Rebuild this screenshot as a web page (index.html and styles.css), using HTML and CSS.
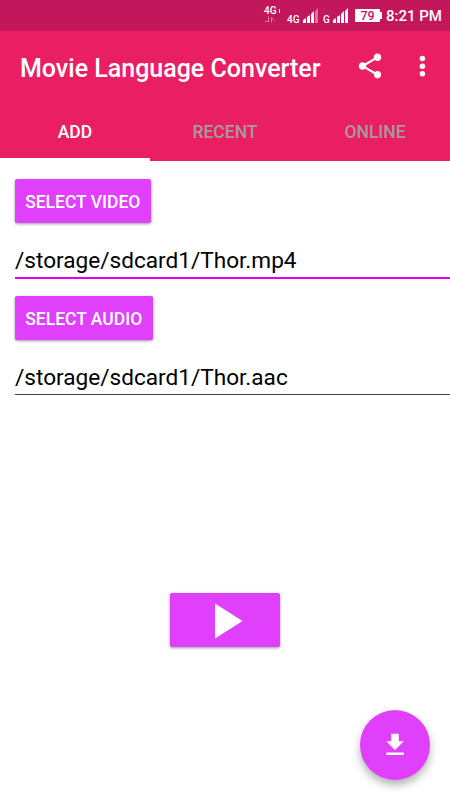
FILE: index.html
```
<!DOCTYPE html>
<html lang="en">

<head>
    <meta charset="UTF-8">
    <meta name="viewport" content="width=device-width, initial-scale=1.0">
    <title>Movie Language Converter</title>

    <link rel="stylesheet" href="styles.css">
</head>

<body>
    <div class="status-bar">
        <div class="data">
            <span>4G<i></i></span>
            <svg width="12" height="7" viewBox="0 0 12 7">
                <path d="M1 5.500h3.500V.5M7.500 6.500V1.500l3.500 3.500" />
            </svg>
        </div>
        <span class="net net-4g">4G</span>
        <svg class="signal" width="15" height="15" viewBox="0 0 15 15">
            <path d="M0 15v-3l3-2v5zM4 15V9l3-2v8zM8 15V6l3-3v12z" />
            <path class="dim" d="M12 15V3l3-3v15z" />
        </svg>
        <span class="net net-g">G</span>
        <svg class="signal" width="15" height="15" viewBox="0 0 15 15">
            <path d="M0 15v-3l3-2v5zM4 15V9l3-2v8zM8 15V6l3-3v12zM12 15V3l3-3v15z" />
        </svg>
        <span class="battery">79</span>
        <i class="battery-tip"></i>
        <span class="time">8:21 PM</span>
    </div>

    <header>
        <div class="toolbar">
            <h1>Movie Language Converter</h1>
            <svg class="share" width="30" height="30" viewBox="0 0 24 24">
                <path d="M18 16.080c-.76 0-1.440.3-1.960.77L8.910 12.700c.05-.23.09-.46.09-.7s-.04-.47-.09-.7l7.050-4.110c.54.5 1.250.81 2.040.81 1.660 0 3-1.340 3-3s-1.340-3-3-3-3 1.340-3 3c0 .24.04.47.09.7L8.040 9.810C7.500 9.310 6.790 9 6 9c-1.660 0-3 1.340-3 3s1.340 3 3 3c.79 0 1.500-.31 2.040-.81l7.120 4.160c-.05.21-.08.43-.08.65 0 1.610 1.310 2.920 2.920 2.920s2.920-1.310 2.920-2.920-1.310-2.920-2.920-2.920z" />
            </svg>
            <svg class="more" width="30" height="30" viewBox="0 0 24 24">
                <circle cx="12.300" cy="6" r="2.200" />
                <circle cx="12.300" cy="12.100" r="2.200" />
                <circle cx="12.300" cy="18.200" r="2.200" />
            </svg>
        </div>
        <nav class="tabs">
            <a class="tab active">ADD</a>
            <a class="tab">RECENT</a>
            <a class="tab">ONLINE</a>
        </nav>
    </header>

    <main>
        <button class="btn btn-video" type="button">SELECT VIDEO</button>
        <div class="field focused">/storage/sdcard1/Thor.mp4</div>
        <button class="btn btn-audio" type="button">SELECT AUDIO</button>
        <div class="field">/storage/sdcard1/Thor.aac</div>

        <button class="btn play" type="button" aria-label="Play">
            <svg width="28" height="36" viewBox="0 0 28 36">
                <path d="M0 .5v35l27.500-17.500z" />
            </svg>
        </button>
    </main>

    <button class="fab" type="button" aria-label="Download">
        <svg width="30" height="30" viewBox="0 0 24 24">
            <path d="M19 9h-4V3H9v6H5l7 7 7-7zM5 18v2h14v-2H5z" />
        </svg>
    </button>
</body>

</html>
```
FILE: styles.css
```
body {
    font-family: Roboto, sans-serif;
    background-color: #fff;
    margin: 0;
    height: 800px;
    overflow: hidden;
    position: relative;
}

svg {
    display: block;
    fill: #fff;
    flex: none;
}

/* status bar */
.status-bar {
    display: flex;
    align-items: flex-start;
    height: 31px;
    padding-left: 264px;
    background-color: #c2185b;
    color: #fff;
    box-sizing: border-box;
}

.data {
    width: 18px;
    padding-top: 7px;
    font-size: 10px;
    font-weight: 500;
    line-height: 8px;
}

.data span {
    display: flex;
}

.data i {
    width: 1px;
    height: 4px;
    margin: 2px 0 0 2px;
    background-color: #fff;
}

.data svg {
    margin-top: 1px;
    fill: none;
    stroke: #e07fa5;
}

.net {
    margin-top: 16px;
    font-size: 10px;
    font-weight: 500;
    line-height: 8px;
}

.net-4g {
    width: 16px;
    margin-left: 5px;
}

.net-g {
    width: 10px;
    margin-left: 5px;
}

.signal {
    margin-top: 8px;
}

.dim {
    fill: #dd749d;
}

.battery {
    width: 25px;
    height: 13px;
    margin: 9px 0 0 7px;
    border-radius: 1px;
    background-color: #fff;
    color: #c2185b;
    font-size: 12.500px;
    font-weight: 500;
    line-height: 14px;
    text-align: center;
}

.battery-tip {
    width: 2px;
    height: 7px;
    margin-top: 12px;
    background-color: #fff;
}

.time {
    margin: 7px 0 0 4px;
    font-size: 15px;
    font-weight: 500;
    line-height: 18px;
    white-space: nowrap;
}

/* header */
header {
    height: 130px;
    background-color: #e91e63;
    color: #fff;
}

.toolbar {
    display: flex;
    align-items: center;
    height: 70px;
    padding-left: 20px;
}

h1 {
    width: 335px;
    margin: 4px 0 0;
    font-size: 25px;
    font-weight: 500;
    white-space: nowrap;
}

.more {
    margin-left: 22px;
}

.tabs {
    display: flex;
    height: 60px;
}

.tab {
    flex: 1;
    box-sizing: border-box;
    border-bottom: 3px solid transparent;
    color: #a99a9a;
    font-size: 17.500px;
    font-weight: 500;
    line-height: 62px;
    text-align: center;
}

.tab.active {
    border-color: #fff;
    color: #fff;
}

/* content */
main {
    display: flex;
    flex-direction: column;
    align-items: flex-start;
    padding: 18px 0 0 15px;
}

.btn {
    height: 44px;
    padding: 2px 0 0;
    border: none;
    border-radius: 2px;
    background-color: #e040fb;
    color: #fff;
    font-family: inherit;
    font-size: 17.500px;
    font-weight: 500;
    box-shadow: 0 1px 3px rgba(0, 0, 0, 0.4);
}

.btn-video {
    width: 135.500px;
}

.btn-audio {
    width: 137.500px;
    margin-top: 17px;
}

.field {
    box-sizing: border-box;
    width: 100%;
    height: 55px;
    padding-top: 23px;
    border-bottom: 1px solid #444;
    color: #000;
    font-size: 22.600px;
    line-height: 30px;
}

.field.focused {
    height: 56px;
    border-bottom: 2px solid #e000f8;
}

.play {
    display: flex;
    align-items: center;
    width: 110px;
    height: 54px;
    margin: 198px 0 0 155px;
    padding: 1px 0 0 45px;
}

/* floating button */
.fab {
    position: absolute;
    right: 20px;
    bottom: 20px;
    display: flex;
    align-items: center;
    justify-content: center;
    width: 70px;
    height: 70px;
    padding: 0;
    border: none;
    border-radius: 50%;
    background-color: #e040fb;
    box-shadow: 0 5px 8px rgba(0, 0, 0, 0.3);
}
```
